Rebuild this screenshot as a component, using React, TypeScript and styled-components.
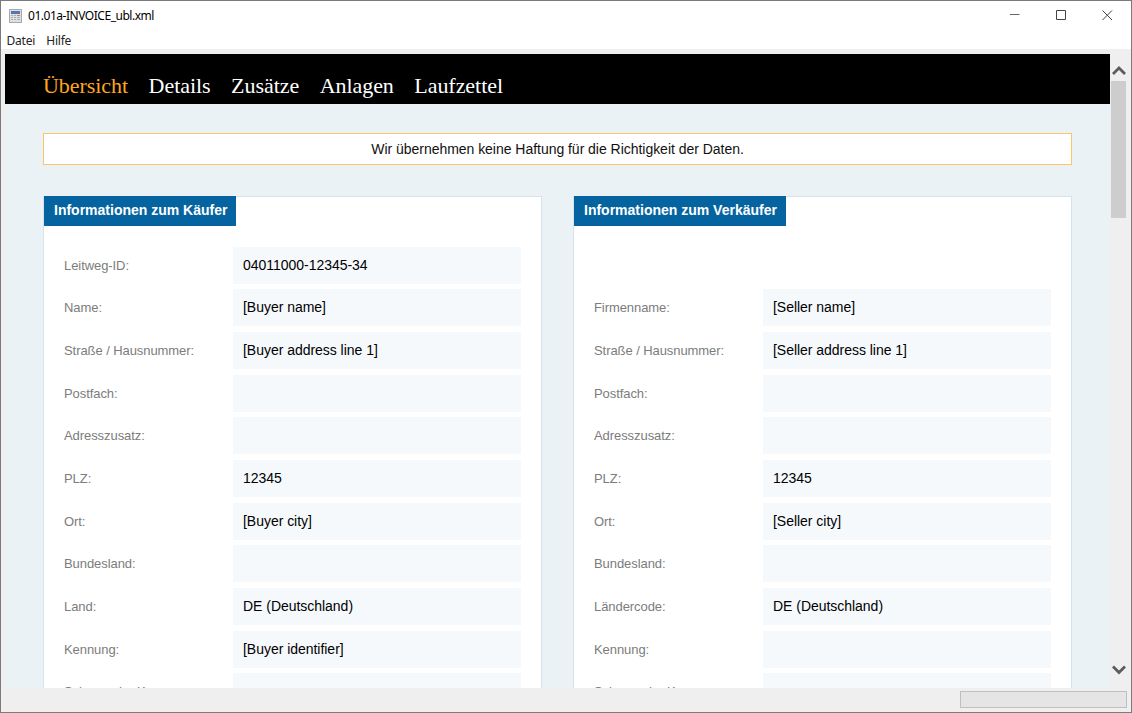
import React from 'react';
import styled, { createGlobalStyle } from 'styled-components';

const GlobalStyle = createGlobalStyle`
  * { box-sizing: border-box; }
  body { margin: 0; overflow: hidden; }
`;

const Window = styled.div`
  width: 1132px;
  height: 713px;
  border: 1px solid #7b7b7b;
  background: #efefef;
  display: flex;
  flex-direction: column;
  overflow: hidden;
  font-family: 'Liberation Sans', sans-serif;
`;

const TitleBar = styled.header`
  height: 29px;
  flex: none;
  background: #fff;
  display: flex;
  align-items: center;
  padding: 0 1px 0 8px;
  font: 12px/16px 'Noto Sans', sans-serif;
  color: #000;
`;

const Title = styled.span`
  flex: 1;
  margin-left: 6px;
  letter-spacing: -0.47px;
`;

const WindowButtons = styled.div`
  display: flex;
`;

const WindowButton = styled.span`
  width: 46px;
  height: 29px;
  display: flex;
  align-items: center;
  justify-content: center;
`;

const MenuBar = styled.nav`
  height: 19px;
  flex: none;
  background: #fff;
  display: flex;
  gap: 11px;
  padding-left: 5.5px;
  font: 12px/21px 'Noto Sans', sans-serif;
  letter-spacing: -0.2px;
  color: #222;
`;

const Workspace = styled.div`
  height: 639px;
  flex: none;
  display: flex;
  padding: 5px 4px 0 4px;
`;

const Page = styled.main`
  width: 1105px;
  flex: none;
  background: #eaf2f5;
  overflow: hidden;
`;

const Tabs = styled.nav`
  height: 50px;
  background: #000;
  display: flex;
  gap: 20.5px;
  padding: 18px 0 0 38px;
  font: 22px/28px 'Liberation Serif', serif;
  letter-spacing: -0.05px;
`;

const Tab = styled.span<{ $active?: boolean }>`
  color: ${(p) => (p.$active ? '#ffa61c' : '#fff')};
`;

const Notice = styled.div`
  height: 32px;
  margin: 29px 38px 31px;
  border: 1px solid #fdc567;
  background: #fff;
  text-align: center;
  font-size: 14px;
  letter-spacing: -0.03px;
  line-height: 31px;
  color: #111;
`;

const Panels = styled.div`
  display: flex;
  gap: 31px;
  padding: 0 38px;
`;

const Panel = styled.section`
  width: 499px;
  height: 600px;
  flex: none;
  background: #fff;
  border: 1px solid #d4e3ec;
`;

const PanelTitle = styled.h2`
  display: block;
  width: max-content;
  height: 30px;
  margin: -1px 0 0;
  padding: 0 9px 0 10px;
  background: #0564a0;
  color: #fff;
  font-size: 14px;
  line-height: 29px;
  font-weight: bold;
`;

const Fields = styled.div`
  display: flex;
  flex-direction: column;
  gap: 5.7px;
  padding: 20.6px 20px 0;
`;

const Field = styled.div`
  height: 37px;
  display: flex;
  align-items: stretch;
`;

const Label = styled.span`
  width: 169px;
  flex: none;
  font-size: 13px;
  letter-spacing: -0.07px;
  line-height: 37px;
  color: #7c7c7c;
`;

const Value = styled.span`
  flex: 1;
  padding-left: 10px;
  background: #f5f9fc;
  font-size: 14px;
  letter-spacing: -0.03px;
  line-height: 36px;
  color: #000;
`;

const ScrollBar = styled.div`
  width: 17px;
  flex: none;
  display: flex;
  flex-direction: column;
  align-items: center;
  padding: 11px 0 12px;
`;

const Thumb = styled.div`
  width: 15px;
  height: 137px;
  margin: 4px 0 auto;
  background: #cdcdcd;
`;

const StatusBar = styled.footer`
  flex: 1;
  display: flex;
  justify-content: flex-end;
  padding: 3px 4px 0 0;
`;

const Progress = styled.div`
  width: 167px;
  height: 17px;
  background: #e5e5e5;
  border: 1px solid #bfbfbf;
`;

const FileIcon = () => (
  <svg width="13" height="14" viewBox="0 0 13 14">
    <rect x="0.5" y="0.5" width="12" height="13" fill="#dfe0e1" stroke="#a9a9a9" />
    <rect x="2" y="2" width="9" height="3" fill="#4e75b4" />
    <g fill="#a4acb5">
      <rect x="2" y="6" width="2" height="1" /><rect x="5" y="6" width="2" height="1" />
      <rect x="2" y="8" width="2" height="1" /><rect x="5" y="8" width="2" height="1" /><rect x="8" y="8" width="3" height="1" />
      <rect x="2" y="10" width="2" height="1" /><rect x="5" y="10" width="2" height="1" /><rect x="8" y="10" width="3" height="1" />
    </g>
    <rect x="8" y="6" width="3" height="1" fill="#dc6b60" />
  </svg>
);

const Arrow = ({ down }: { down?: boolean }) => (
  <svg width="14" height="12" viewBox="0 0 14 12" style={{ flex: 'none' }}>
    <path d={down ? 'M1 2.5 7 8.5 13 2.5' : 'M1 9 7 3 13 9'} fill="none" stroke="#5c5c5c" strokeWidth="2.8" />
  </svg>
);

const buyer: [string, string][] = [
  ['Leitweg-ID:', '04011000-12345-34'],
  ['Name:', '[Buyer name]'],
  ['Straße / Hausnummer:', '[Buyer address line 1]'],
  ['Postfach:', ''],
  ['Adresszusatz:', ''],
  ['PLZ:', '12345'],
  ['Ort:', '[Buyer city]'],
  ['Bundesland:', ''],
  ['Land:', 'DE (Deutschland)'],
  ['Kennung:', '[Buyer identifier]'],
  ['Schema der Kennung:', ''],
];

const seller: ([string, string] | null)[] = [
  null,
  ['Firmenname:', '[Seller name]'],
  ['Straße / Hausnummer:', '[Seller address line 1]'],
  ['Postfach:', ''],
  ['Adresszusatz:', ''],
  ['PLZ:', '12345'],
  ['Ort:', '[Seller city]'],
  ['Bundesland:', ''],
  ['Ländercode:', 'DE (Deutschland)'],
  ['Kennung:', ''],
  ['Schema der Kennung:', ''],
];

const InfoPanel = ({ title, rows }: { title: string; rows: ([string, string] | null)[] }) => (
  <Panel>
    <PanelTitle>{title}</PanelTitle>
    <Fields>
      {rows.map((row, i) => (
        <Field key={i}>
          {row && <><Label>{row[0]}</Label><Value>{row[1]}</Value></>}
        </Field>
      ))}
    </Fields>
  </Panel>
);

export default function App() {
  return (
    <>
      <GlobalStyle />
      <Window>
        <TitleBar>
          <FileIcon />
          <Title>01.01a-INVOICE_ubl.xml</Title>
          <WindowButtons>
            <WindowButton>
              <svg width="11" height="11"><path d="M0 4.5H9.5" stroke="#666" /></svg>
            </WindowButton>
            <WindowButton>
              <svg width="11" height="11"><path d="M.5 .5H9.5V9.5H.5Z" fill="none" stroke="#444" /></svg>
            </WindowButton>
            <WindowButton>
              <svg width="11" height="11"><path d="M.5 .5 10 10M10 .5 .5 10" stroke="#444" /></svg>
            </WindowButton>
          </WindowButtons>
        </TitleBar>
        <MenuBar><span>Datei</span><span>Hilfe</span></MenuBar>
        <Workspace>
          <Page>
            <Tabs>
              <Tab $active>Übersicht</Tab>
              <Tab>Details</Tab>
              <Tab>Zusätze</Tab>
              <Tab>Anlagen</Tab>
              <Tab>Laufzettel</Tab>
            </Tabs>
            <Notice>Wir übernehmen keine Haftung für die Richtigkeit der Daten.</Notice>
            <Panels>
              <InfoPanel title="Informationen zum Käufer" rows={buyer} />
              <InfoPanel title="Informationen zum Verkäufer" rows={seller} />
            </Panels>
          </Page>
          <ScrollBar>
            <Arrow />
            <Thumb />
            <Arrow down />
          </ScrollBar>
        </Workspace>
        <StatusBar><Progress /></StatusBar>
      </Window>
    </>
  );
}
